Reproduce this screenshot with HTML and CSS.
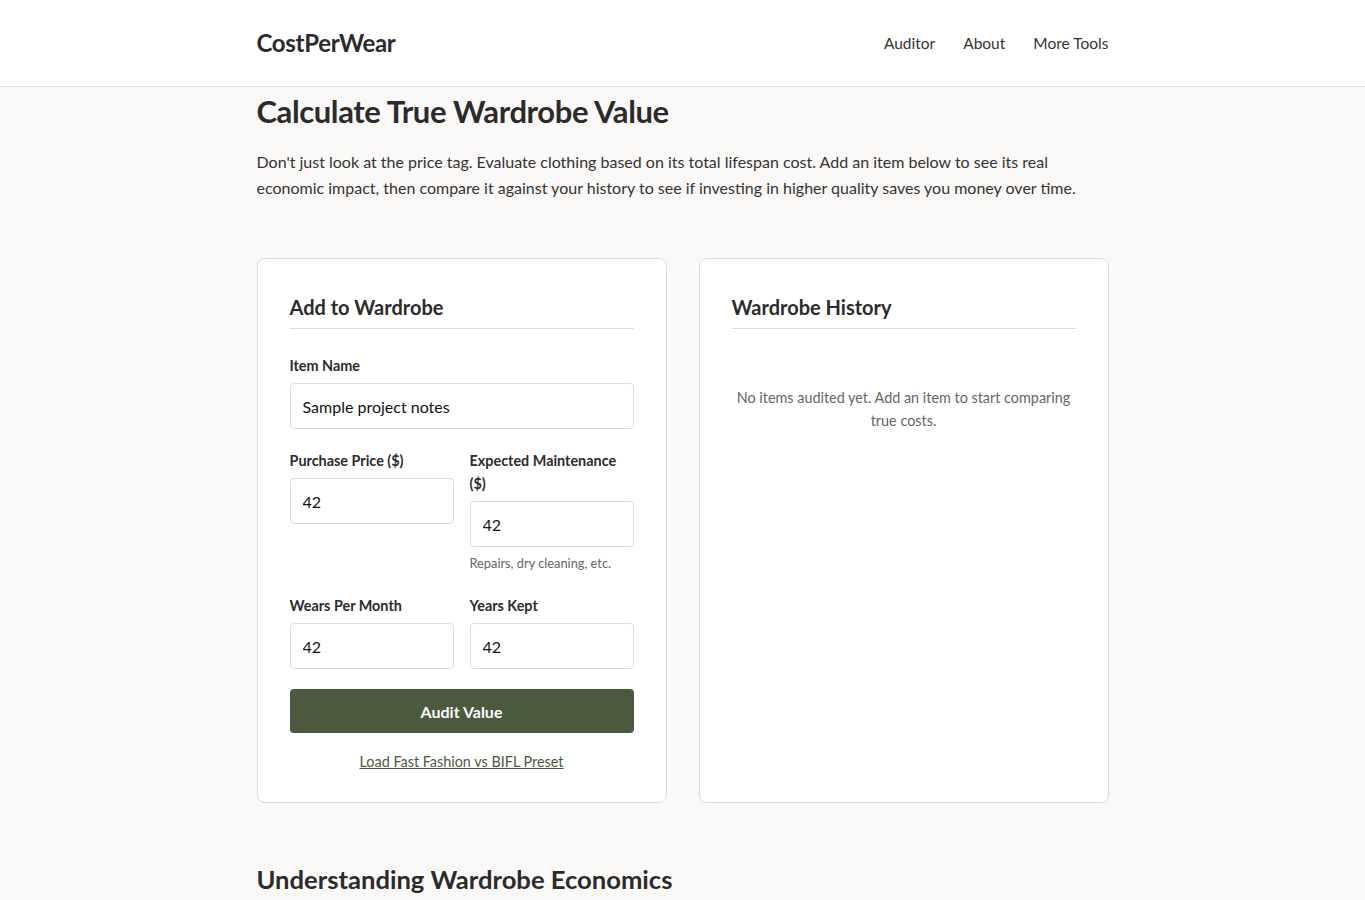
FILE: index.html
```html
<!DOCTYPE html>
<html>
  <head>
    <meta charset="utf-8">
    <title>CostPerWear - Wardrobe Value Auditor</title>
    <link rel="stylesheet" href="styles.css">
  </head>
  <body>
    <header class="site-header">
      <div class="wrap header-row">
        <a class="logo" href="#">CostPerWear</a>
        <nav class="nav">
          <a href="#">Auditor</a>
          <a href="#">About</a>
          <a href="#">More Tools</a>
        </nav>
      </div>
    </header>

    <main class="wrap">
      <h1>Calculate True Wardrobe Value</h1>
      <p class="intro">Don't just look at the price tag. Evaluate clothing based on its total lifespan cost. Add an item below to see its real economic impact, then compare it against your history to see if investing in higher quality saves you money over time.</p>

      <div class="tool-grid">
        <section class="card">
          <h2 class="card-title">Add to Wardrobe</h2>
          <div class="form-group">
            <label for="name">Item Name</label>
            <input id="name" type="text" value="Sample project notes">
          </div>
          <div class="form-row">
            <div class="form-group">
              <label for="price">Purchase Price ($)</label>
              <input id="price" type="number" value="42">
            </div>
            <div class="form-group">
              <label for="maint">Expected Maintenance ($)</label>
              <input id="maint" type="number" value="42">
              <small class="hint">Repairs, dry cleaning, etc.</small>
            </div>
          </div>
          <div class="form-row">
            <div class="form-group">
              <label for="wears">Wears Per Month</label>
              <input id="wears" type="number" value="42">
            </div>
            <div class="form-group">
              <label for="years">Years Kept</label>
              <input id="years" type="number" value="42">
            </div>
          </div>
          <button class="btn">Audit Value</button>
          <div class="preset"><a href="#">Load Fast Fashion vs BIFL Preset</a></div>
        </section>

        <section class="card">
          <h2 class="card-title">Wardrobe History</h2>
          <p class="empty">No items audited yet. Add an item to start comparing true costs.</p>
        </section>
      </div>

      <h2 class="section-title">Understanding Wardrobe Economics</h2>
    </main>
  </body>
</html>
```

FILE: styles.css
```css
* {
    box-sizing: border-box;
}

body {
    margin: 0;
    font-family: Lato, "Open Sans", sans-serif;
    color: #2b2b2b;
    background-color: #fbf9f7;
    line-height: 1.6;
}

.wrap {
    max-width: 900px;
    margin: 0 auto;
    padding: 0 24px;
}

/* header */
.site-header {
    background-color: #fff;
    border-bottom: 1px solid #e2e0dd;
}

.header-row {
    display: flex;
    justify-content: space-between;
    align-items: center;
    height: 86px;
}

.logo {
    font-size: 24px;
    font-weight: 700;
    color: #2b2b2b;
    text-decoration: none;
    letter-spacing: -0.3px;
}

.nav {
    display: flex;
    gap: 28px;
}

.nav a {
    font-size: 15.5px;
    color: #333;
    text-decoration: none;
}

/* intro */
h1 {
    font-size: 31px;
    line-height: 1.2;
    margin: 6px 0 19px;
    letter-spacing: -0.4px;
}

.intro {
    font-size: 16px;
    line-height: 26px;
    color: #333;
    margin: 0;
}

/* cards */
.tool-grid {
    display: grid;
    grid-template-columns: 1fr 1fr;
    gap: 32px;
    margin-top: 57px;
}

.card {
    background-color: #fff;
    border: 1px solid #dedcd8;
    border-radius: 8px;
    padding: 32px 32px 29px;
}

.card-title {
    font-size: 20px;
    line-height: 32px;
    margin: 0 0 25px;
    padding-bottom: 5px;
    border-bottom: 1px solid #dedcd8;
}

.form-row {
    display: grid;
    grid-template-columns: 1fr 1fr;
    gap: 16px;
}

.form-group {
    margin-bottom: 20px;
}

.form-group label {
    display: block;
    font-size: 14.4px;
    font-weight: 700;
    line-height: 23px;
    margin-bottom: 6px;
    color: #2b2b2b;
}

.form-group input {
    display: block;
    width: 100%;
    height: 46px;
    padding: 0 12px;
    font-family: inherit;
    font-size: 16px;
    color: #111;
    background-color: #fff;
    border: 1px solid #dcdcdc;
    border-radius: 4px;
}

.hint {
    display: block;
    margin-top: 6px;
    font-size: 12.8px;
    line-height: 21px;
    color: #666;
}

.btn {
    display: block;
    width: 100%;
    height: 44px;
    font-family: inherit;
    font-size: 16px;
    font-weight: 700;
    color: #fff;
    background-color: #4b5a3e;
    border: none;
    border-radius: 4px;
    cursor: pointer;
}

.preset {
    text-align: center;
    margin-top: 17px;
    line-height: 22px;
}

.preset a {
    font-size: 14.4px;
    color: #4b5a3e;
}

.empty {
    text-align: center;
    color: #666;
    font-size: 14.4px;
    line-height: 23px;
    margin: 57px 0 0;
}

.section-title {
    font-size: 25.6px;
    line-height: 1.2;
    margin: 61px 0 0;
}
```
